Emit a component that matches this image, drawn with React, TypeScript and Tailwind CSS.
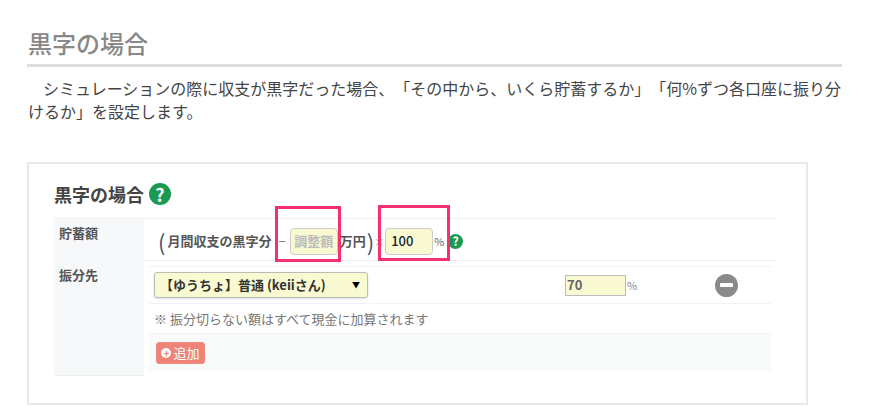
import React from "react";

const Q = ({ size }: { size: number }) => (
  <span
    className="inline-flex items-center justify-center rounded-full bg-[#1a9a50] text-white font-bold shrink-0"
    style={{ width: size, height: size, fontSize: size * 0.82, lineHeight: 1 }}
  >
    ?
  </span>
);

export default function App() {
  return (
    <div className="relative w-[873px] h-[411px] overflow-hidden bg-white font-['Noto_Sans_CJK_JP','Noto_Sans',sans-serif] [text-spacing-trim:space-all]">
      <div className="pt-[26px] pl-[27px] w-[842px]">
        <h2 className="text-[24px] leading-[34px] pl-px font-medium text-[#888] border-b-[3px] border-[#ddd] pb-[4px]">黒字の場合</h2>
        <p className="mt-[10px] -mr-[4px] pl-px text-[16px] leading-[23px] text-[#444] indent-[15px]">
          シミュレーションの際に収支が黒字だった場合、「その中から、いくら貯蓄するか」「何%ずつ各口座に振り分けるか」を設定します。
        </p>
        <div className="mt-[39px] w-[781px] h-[243px] border-2 border-[#e8e8e8] pt-[15px] pl-[25px]">
          <div className="flex items-center gap-[5px] h-[30px]">
            <span className="text-[18px] font-bold text-[#444]">黒字の場合</span>
            <Q size={22} />
          </div>
          <div className="mt-[9px] w-[722px] grid grid-cols-[90px_1fr] text-[#555]">
            <div className="h-[43px] bg-[#f6f8fa] border-t border-[#eef0f0] pl-[5px] pt-[4px] text-[13px] font-bold">貯蓄額</div>
            <div className="h-[43px] border-t border-b border-[#eef0f0] flex items-center pl-[14px] pt-[3px] text-[13px] font-bold">
              <span className="text-[22px] font-normal leading-none text-[#456]">(</span>
              <span className="ml-[2px]">月間収支の黒字分</span>
              <span className="ml-[7px] font-normal text-[#777]">−</span>
              <span className="ml-[4px] flex items-center justify-center w-[48px] h-[27px] rounded-[4px] border border-[#ccc] bg-[#fafad2] text-[#bbb] text-[13px]">調整額</span>
              <span className="ml-[2px]">万円</span>
              <span className="ml-px text-[22px] font-normal leading-none text-[#456]">)</span>
              <span className="font-normal text-[#999] text-[10px]">×</span>
              <span className="ml-[1px] flex items-center w-[48px] h-[27px] rounded-[4px] border border-[#ccc] bg-[#fafad2] pl-[5px] text-[#223] text-[13px] font-medium">100</span>
              <span className="ml-px text-[11px] font-normal text-[#666]">%</span>
              <span className="ml-[4px] flex"><Q size={15} /></span>
            </div>
            <div className="h-[115px] bg-[#f6f8fa] border-b border-[#eef0f0] pl-[5px] pt-[4px] text-[13px] font-bold">振分先</div>
            <div className="pl-[5px] pr-[5px] pt-[5px]">
              <div className="h-[38px] border-t border-b border-[#f0f3f3] flex items-center pl-[5px]">
                <div className="w-[214px] h-[26px] rounded-[3px] border border-[#bbb] bg-[#fafad2] flex items-center justify-between pl-[5px] pr-[7px] text-[13px] font-bold text-[#333] shadow-sm whitespace-nowrap">
                  <span>【ゆうちょ】普通 (keiiさん)</span>
                  <span className="text-[8px] text-black">▼</span>
                </div>
                <div className="ml-[197px] w-[61px] h-[21px] border border-[#bbb] bg-[#fafad2] flex items-center pl-px text-[13px] font-bold text-[#666]">70</div>
                <span className="ml-px text-[11px] text-[#888]">%</span>
                <span className="ml-[78px] w-[23px] h-[23px] rounded-full bg-[#8a8a8a] flex items-center justify-center">
                  <span className="w-[13px] h-[4px] rounded-[1px] bg-white" />
                </span>
              </div>
              <div className="h-[29px] flex items-center pl-[5px] text-[13px] text-[#777]">※ 振分切らない額はすべて現金に加算されます</div>
              <div className="h-[38px] bg-[#f9fafa] border-t border-[#f0f3f3] flex items-center pl-[7px]">
                <span className="w-[49px] h-[22px] rounded-[3px] border border-[#f08a80] bg-[#ee8377] flex items-center justify-center gap-[2px] text-[13px] text-white">
                  <span className="w-[10px] h-[10px] rounded-full bg-white text-[#ee8377] text-[10px] leading-[10px] font-bold text-center">+</span>
                  追加
                </span>
              </div>
            </div>
          </div>
        </div>
      </div>
      <div className="absolute left-[275px] top-[206px] w-[66px] h-[56px] border-[3px] border-[#f5306f]" />
      <div className="absolute left-[378px] top-[205px] w-[72px] h-[56px] border-[3px] border-[#f5306f]" />
    </div>
  );
}
